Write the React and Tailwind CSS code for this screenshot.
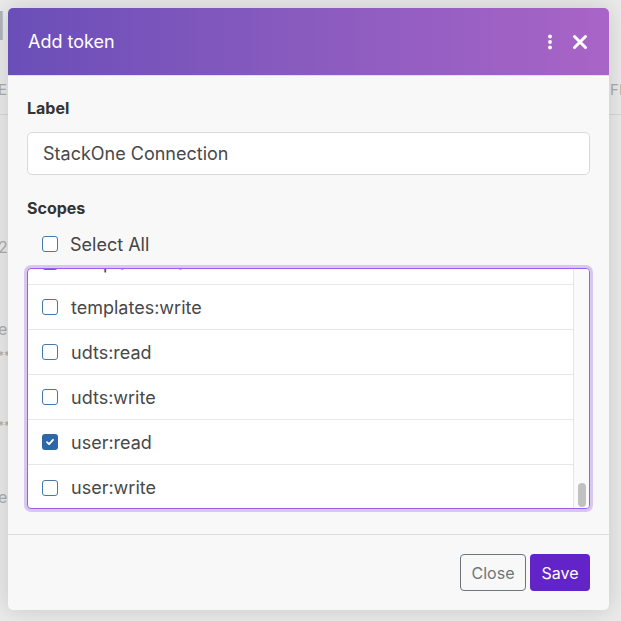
import React from "react";

function Box({ checked }) {
  if (checked) {
    return (
      <span className="flex h-[16px] w-[16px] shrink-0 items-center justify-center rounded-[3px] bg-[#2d67a6]">
        <svg width="10" height="10" viewBox="0 0 10 10" fill="none">
          <path d="M2 5.2 L4.1 7.2 L8 2.8" stroke="white" strokeWidth="1.8" strokeLinecap="round" strokeLinejoin="round" />
        </svg>
      </span>
    );
  }
  return <span className="block h-[16px] w-[16px] shrink-0 rounded-[3px] border-[1.5px] border-[#4577ad] bg-white" />;
}

const rows = [
  { name: "templates:read", checked: false },
  { name: "templates:write", checked: false },
  { name: "udts:read", checked: false },
  { name: "udts:write", checked: false },
  { name: "user:read", checked: true },
  { name: "user:write", checked: false },
];

export default function App() {
  return (
    <div className="relative h-[621px] w-[621px] overflow-hidden bg-[#ebebeb] font-['Inter',sans-serif]">
      {/* background page */}
      <div className="flex flex-col text-[#adadad]">
        <div className="-ml-[24px] mt-[4px] h-[44px] text-[40px] leading-[44px] text-[#b4b4b4]">N</div>
        <div className="mt-[30px] flex h-[24px] items-center justify-between text-[15px]">
          <span className="-ml-[2px]">E</span>
          <span className="-mr-[2px]">FI</span>
        </div>
        <div className="mt-[12px] border-b border-[#d9d9d9]" />
        <div className="-ml-[2px] mt-[120px] text-[16px]">2</div>
        <div className="-ml-[2px] mt-[58px] text-[16px]">e</div>
        <div className="-ml-[2px] mt-[6px] text-[12px]">**</div>
        <div className="-ml-[2px] mt-[52px] text-[12px]">**</div>
        <div className="-ml-[2px] mt-[50px] text-[16px]">er</div>
      </div>

      {/* modal */}
      <div className="absolute left-[8px] top-[8px] flex h-[602px] w-[601px] flex-col rounded-[5px] bg-[#f8f8f8] shadow-[0_0_24px_rgba(0,0,0,0.16)]">
        <div className="flex h-[68px] shrink-0 items-center justify-between rounded-t-[5px] border-b border-[#e4deed] bg-gradient-to-r from-[#6a4eb8] via-[#8a5bbf] to-[#a964c7] pl-[20px] pr-[21px]">
          <span className="text-[18px] leading-[24px] text-white">Add token</span>
          <div className="flex items-center gap-[19px]">
            <svg width="6" height="16" viewBox="0 0 6 16">
              <circle cx="3" cy="2.5" r="1.9" fill="white" />
              <circle cx="3" cy="8" r="1.9" fill="white" />
              <circle cx="3" cy="13.5" r="1.9" fill="white" />
            </svg>
            <svg width="16" height="16" viewBox="0 0 16 16">
              <path d="M2.5 2.5 L13.5 13.5 M13.5 2.5 L2.5 13.5" stroke="white" strokeWidth="3" strokeLinecap="round" />
            </svg>
          </div>
        </div>

        <div className="flex flex-1 flex-col px-[19px] pt-[20px]">
          <div className="text-[16px] font-bold leading-[24px] text-[#333]">Label</div>
          <div className="mt-[12px] flex h-[43px] items-center rounded-[5px] border border-[#dadada] bg-white px-[15px] text-[18px] text-[#484848]">
            StackOne Connection
          </div>
          <div className="mt-[21px] text-[16px] font-bold leading-[24px] text-[#333]">Scopes</div>
          <div className="mt-[10px] flex h-[28px] items-center gap-[12px] pl-[15px] text-[18px] text-[#444]">
            <Box checked={false} />
            <span>Select All</span>
          </div>
          <div className="mt-[10px] flex h-[241px] overflow-hidden rounded-[4px] border border-[#9b5cf4] bg-white shadow-[0_0_0_3px_#d8c7f1]">
            <div className="flex-1 overflow-hidden">
              <div className="-mt-[29px]">
                {rows.map((r, i) => (
                  <div
                    key={r.name}
                    className={
                      "flex h-[45px] items-center gap-[13px] pl-[14px] text-[18px] text-[#484848] " +
                      (i < rows.length - 1 ? "border-b border-[#e7e7e7]" : "")
                    }
                  >
                    <Box checked={r.checked} />
                    <span>{r.name}</span>
                  </div>
                ))}
              </div>
            </div>
            <div className="flex w-[16px] shrink-0 flex-col items-center justify-end border-l border-[#e6e6e6] bg-[#fafafa] pb-[1px]">
              <div className="h-[24px] w-[8px] rounded-full bg-[#c1c1c1]" />
            </div>
          </div>
        </div>

        <div className="flex shrink-0 justify-end gap-[4px] border-t border-[#dedede] px-[19px] pb-[19px] pt-[19px]">
          <button className="h-[37px] w-[66px] rounded-[4px] border border-[#6c757d] text-[16px] text-[#6c757d]">Close</button>
          <button className="h-[37px] w-[60px] rounded-[4px] bg-[#6223c8] text-[16px] text-white">Save</button>
        </div>
      </div>
    </div>
  );
}
